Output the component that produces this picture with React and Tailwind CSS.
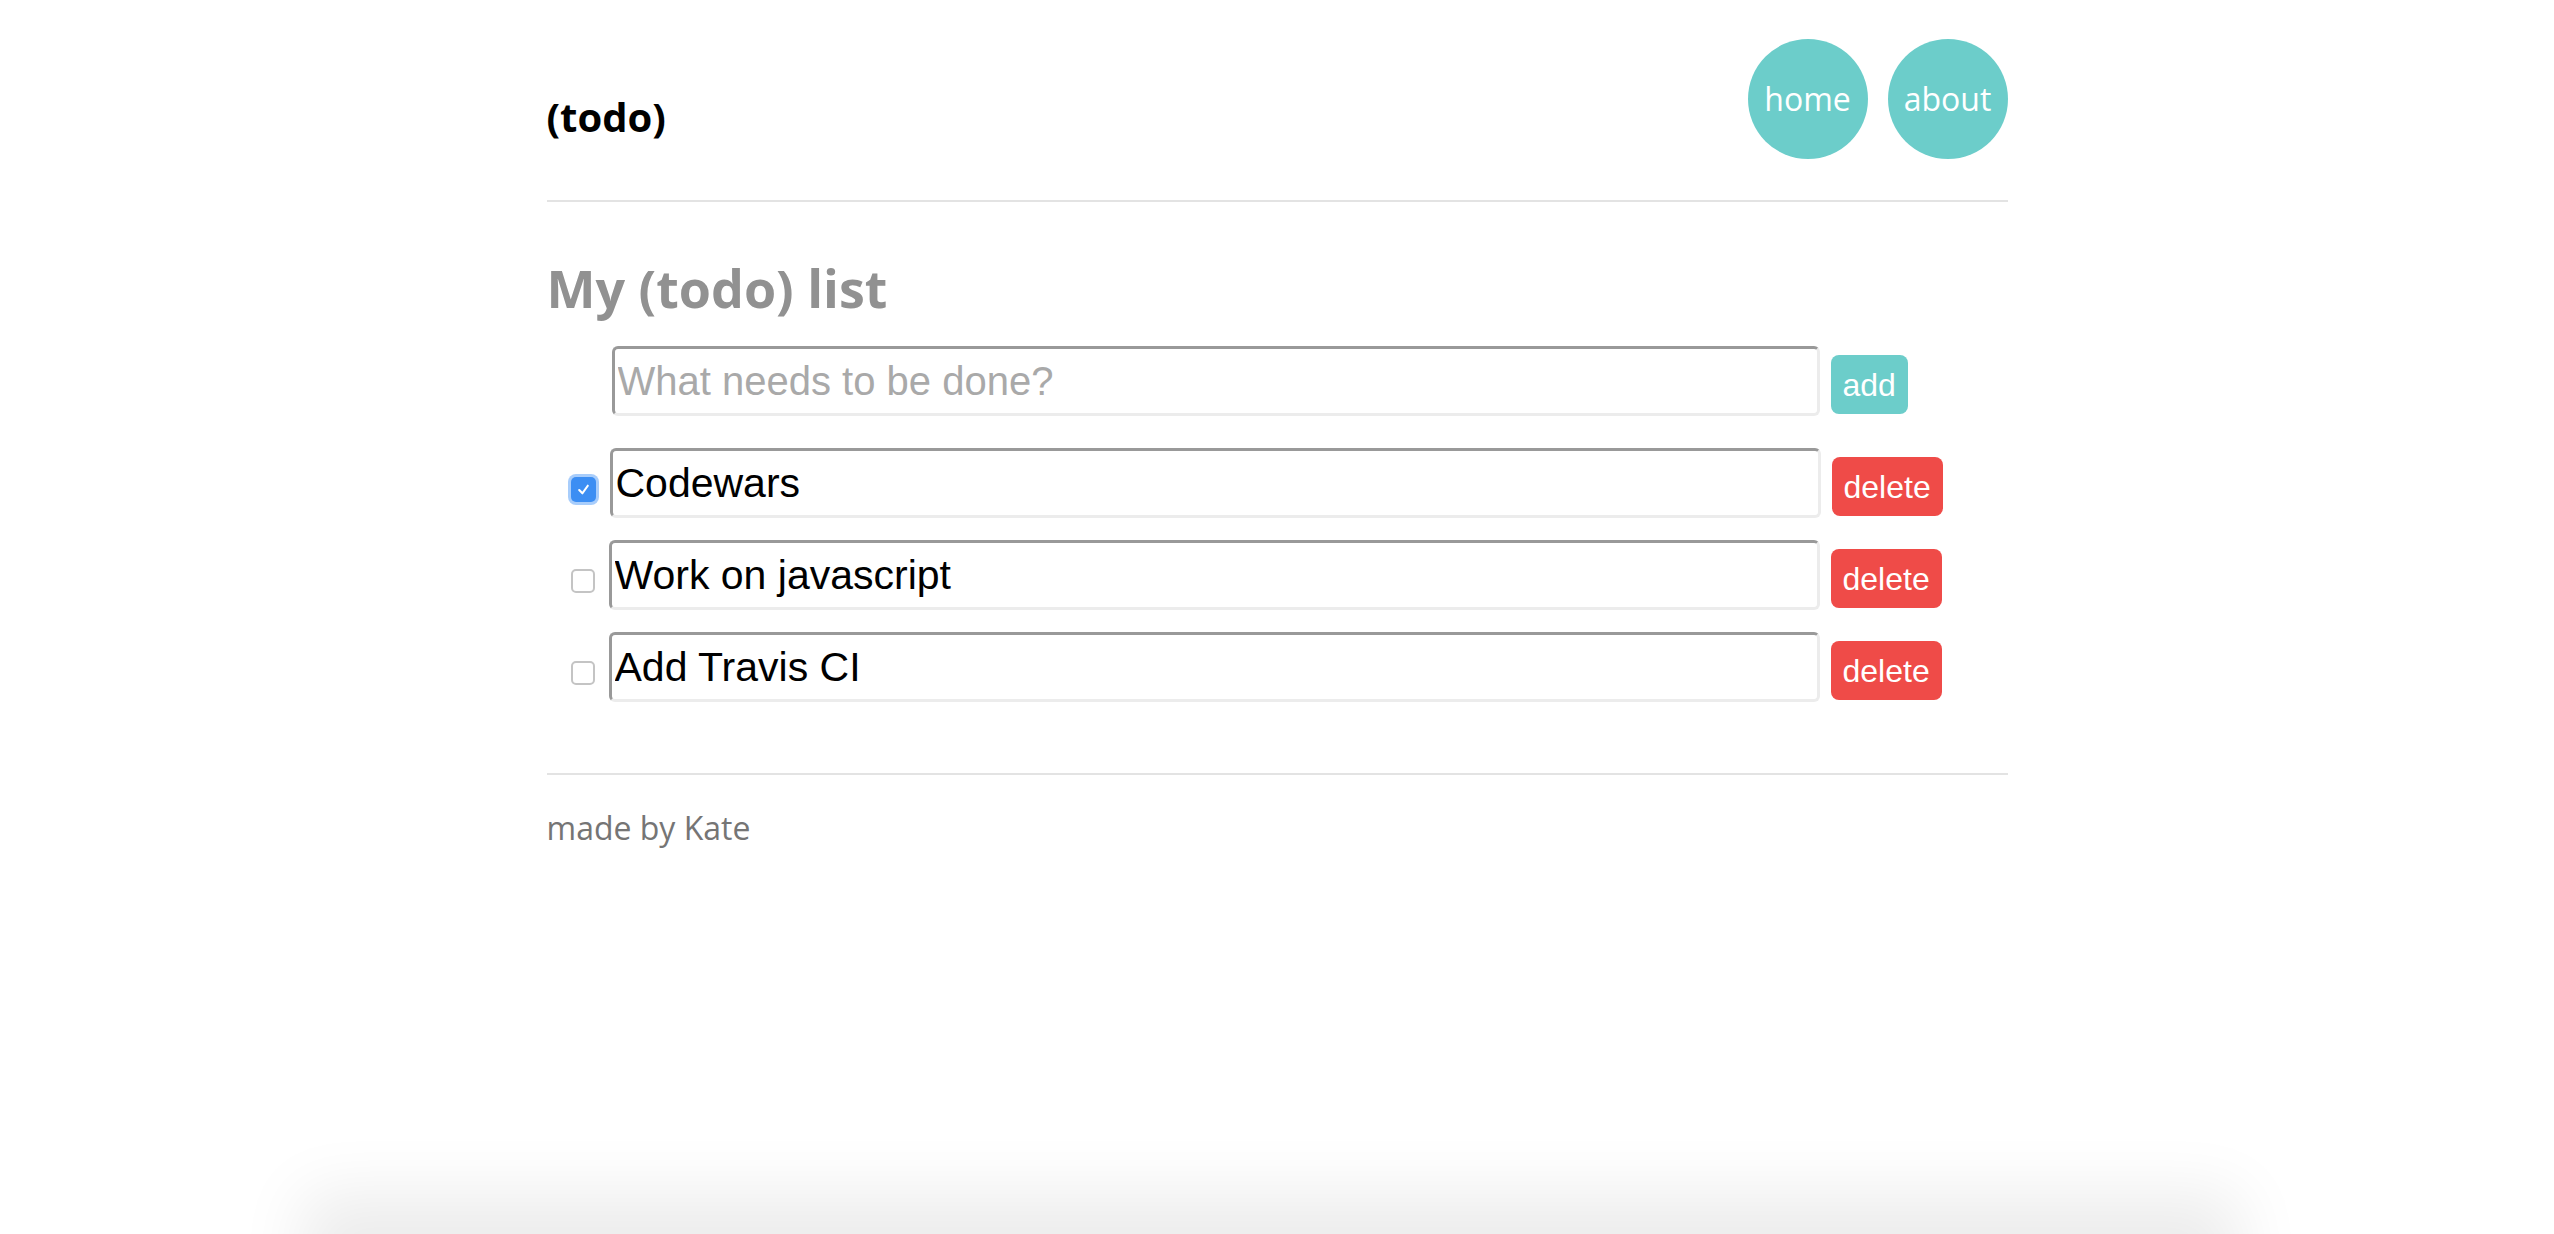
import { useState } from "react"

const todos = [
  { id: 1, text: "Codewars", done: true },
  { id: 2, text: "Work on javascript", done: false },
  { id: 3, text: "Add Travis CI", done: false },
]

function Check({ checked, onChange }) {
  return (
    <button
      type="button"
      onClick={onChange}
      className={
        checked
          ? "mt-[12px] ml-[24px] mr-[14px] flex h-[25px] w-[25px] shrink-0 items-center justify-center rounded-[5px] bg-[#3c8ef3] ring-[3px] ring-[#a8cdfb]"
          : "mt-[12px] ml-[24px] mr-[14px] flex h-[24px] w-[24px] shrink-0 items-center justify-center rounded-[5px] border-2 border-[#c4c4c4] bg-white"
      }
    >
      {checked && (
        <svg width="15" height="15" viewBox="0 0 14 14" fill="none">
          <path d="M3 7.5 L6 10.5 L11 3.5" stroke="white" strokeWidth="2" strokeLinecap="round" strokeLinejoin="round" />
        </svg>
      )}
    </button>
  )
}

export default function App() {
  const [items, setItems] = useState(todos)

  const toggle = (id) => setItems(items.map((t) => (t.id === id ? { ...t, done: !t.done } : t)))
  const remove = (id) => setItems(items.filter((t) => t.id !== id))

  const inputCls =
    "h-[70px] rounded-[6px] border-[3px] border-t-[#999] border-l-[#999] border-b-[#ececec] border-r-[#ececec] bg-white pl-[3px] text-[41px] text-black outline-none font-['Liberation_Sans',Arial,sans-serif] placeholder:text-[#a9a9a9] placeholder:text-[40px]"

  return (
    <div className="relative h-screen overflow-hidden bg-white">
      <div className="mx-auto w-[1461px]">
        {/* header */}
        <header className="flex items-start justify-between pt-[39px]">
          <h1 className="mt-[58px] text-[40px] leading-[40px] font-bold text-black font-['Open_Sans',sans-serif]">
            (todo)
          </h1>
          <nav className="flex gap-[20px]">
            <a className="flex h-[120px] w-[120px] items-center justify-center rounded-full bg-[#6ccdca] text-[32px] text-white font-['Open_Sans',sans-serif]">
              home
            </a>
            <a className="flex h-[120px] w-[120px] items-center justify-center rounded-full bg-[#6ccdca] text-[32px] text-white font-['Open_Sans',sans-serif]">
              about
            </a>
          </nav>
        </header>
        <div className="mt-[41px] h-[2px] bg-[#e3e3e3]" />

        {/* list */}
        <h2 className="mt-[60px] text-[52px] leading-[52px] font-bold text-[#919191] font-['Open_Sans',sans-serif]">
          My (todo) list
        </h2>

        <div className="mt-[32px] flex items-center pl-[65px]">
          <input className={inputCls + " w-[1208px]"} placeholder="What needs to be done?" />
          <button className="mt-[7px] ml-[11px] h-[59px] rounded-[8px] bg-[#6ccdca] px-[12px] text-[32px] text-white font-['Liberation_Sans',Arial,sans-serif]">
            add
          </button>
        </div>

        <ul className="mt-[32px] flex flex-col gap-[22px]">
          {items.map((t) => (
            <li key={t.id} className="flex items-center">
              <Check checked={t.done} onChange={() => toggle(t.id)} />
              <input className={inputCls + " w-[1211px]"} defaultValue={t.text} />
              <button
                onClick={() => remove(t.id)}
                className="mt-[7px] ml-[11px] h-[59px] rounded-[8px] bg-[#ef4b48] px-[12px] text-[32px] text-white font-['Liberation_Sans',Arial,sans-serif]"
              >
                delete
              </button>
            </li>
          ))}
        </ul>

        {/* footer */}
        <div className="mt-[71px] h-[2px] bg-[#e3e3e3]" />
        <p className="mt-[37px] text-[32px] leading-[32px] text-[#757575] font-['Open_Sans',sans-serif]">made by Kate</p>
      </div>

      {/* shadow of the panel below the fold */}
      <div className="absolute top-full left-[303px] right-[315px] h-[200px] shadow-[0_-40px_62px_rgba(0,0,0,0.08)]" />
    </div>
  )
}
